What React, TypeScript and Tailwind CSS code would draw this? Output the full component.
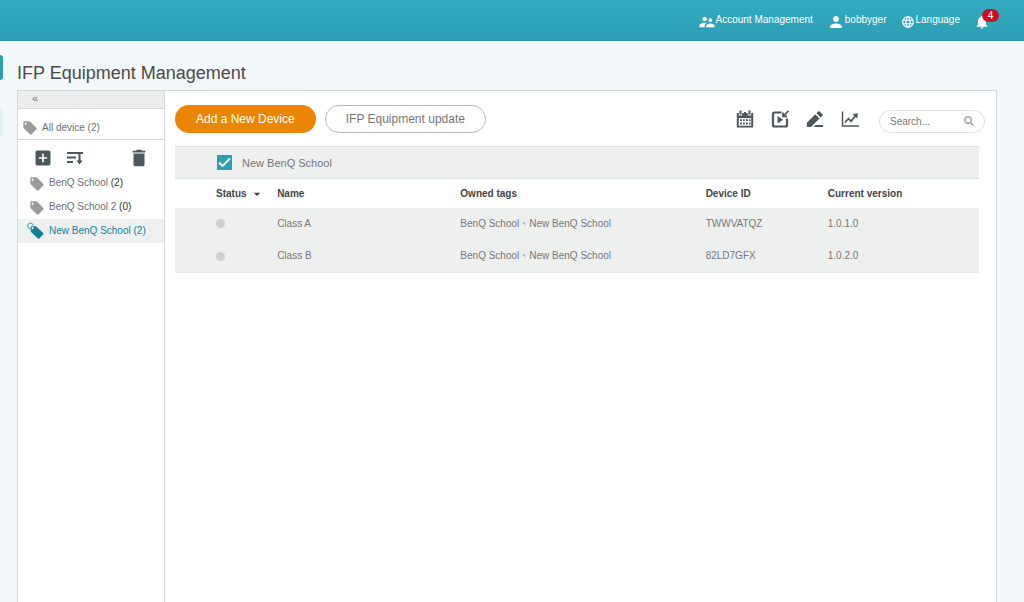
import React from 'react';
import {
  MdAddBox,
  MdArrowDropDown,
  MdDelete,
  MdLanguage,
  MdLocalOffer,
  MdNotifications,
  MdPerson,
  MdSupervisorAccount,
} from 'react-icons/md';
import { FaSearch } from 'react-icons/fa';

const tags = [
  { id: 'benq-school', name: 'BenQ School', count: 2, active: false },
  { id: 'benq-school-2', name: 'BenQ School 2', count: 0, active: false },
  { id: 'new-benq-school', name: 'New BenQ School', count: 2, active: true },
];

const devices = [
  { name: 'Class A', tags: ['BenQ School', 'New BenQ School'], deviceId: 'TWWVATQZ', version: '1.0.1.0' },
  { name: 'Class B', tags: ['BenQ School', 'New BenQ School'], deviceId: '82LD7GFX', version: '1.0.2.0' },
];

const SortIcon: React.FC = () => (
  <svg viewBox="0 0 16 16" className="w-4 h-4" fill="none" stroke="currentColor" strokeWidth="2" aria-hidden="true">
    <path d="M0 3h16M0 7.5h9M0 12h6" />
    <path d="M12.5 3v10" />
    <path d="M9.300 10.500h6.400l-3.200 4z" fill="currentColor" stroke="none" />
  </svg>
);

const CalendarIcon: React.FC = () => (
  <svg viewBox="0 0 18 18" className="w-[18px] h-[18px]" fill="currentColor" aria-hidden="true">
    <path d="M.8 3h2v2.500h3.400V3h5.600v2.500h3.400V3h2v14.500H.8zM2.800 8v7.700h12.400V8z" fillRule="evenodd" />
    <path d="M3.500 0.500h2v4h-2zM8 2h2v2H8zM12.500 0.500h2v4h-2z" />
    <path d="M4 9.200h1.800V11H4zM7 9.200h1.800V11H7zM10 9.200h1.800V11H10zM13 9.200h1.600V11H13zM4 12.600h1.800v1.800H4zM7 12.600h1.800v1.800H7zM10 12.600h1.800v1.800H10zM13 12.600h1.600v1.800H13z" />
  </svg>
);

const PushIcon: React.FC = () => (
  <svg viewBox="0 0 18 18" className="w-[18px] h-[18px]" fill="none" stroke="currentColor" aria-hidden="true">
    <path d="M10.500 2.500h-7A1.500 1.500 0 0 0 2 4v11a1.500 1.500 0 0 0 1.500 1.500h11A1.500 1.500 0 0 0 16 15V8.500" strokeWidth="2.200" />
    <path d="M6.500 6v7.400l5.600-3.700z" fill="currentColor" stroke="none" />
    <path d="M17.500 0.800l-5 5M12 2.400v4h4" strokeWidth="1.700" />
  </svg>
);

const EditIcon: React.FC = () => (
  <svg viewBox="0 0 18 18" className="w-[18px] h-[18px]" fill="currentColor" aria-hidden="true">
    <path d="M.8 12.800V17H5l8.500-8.500-4.200-4.200z" />
    <path d="M10.400 3.300l4.200 4.200 1.900-1.900a1 1 0 0 0 0-1.400l-2.800-2.800a1 1 0 0 0-1.400 0z" />
    <path d="M9.500 15H17v2H7.500z" />
  </svg>
);

const ChartIcon: React.FC = () => (
  <svg viewBox="0 0 18 18" className="w-[18px] h-[18px]" fill="none" stroke="currentColor" aria-hidden="true">
    <path d="M1.500 1.500v14.500H18" strokeWidth="1.500" />
    <path d="M4 12.500l3.500-4 2.500 2.800 5-6.300" strokeWidth="1.800" />
    <path d="M11.500 4l5.200-.8-.2 5.200z" fill="currentColor" stroke="none" />
  </svg>
);

const ActiveTagIcon: React.FC = () => (
  <svg viewBox="0 0 18 18" className="w-[18px] h-[18px]" fill="none" aria-hidden="true">
    <path d="M3.500 4.500l5.500-.3 7.200 6.800a1 1 0 0 1 0 1.400l-4 4a1 1 0 0 1-1.400 0L3.800 9.800z" fill="#13809a" />
    <circle cx="3.500" cy="4" r="2.800" stroke="#3fa3b6" />
    <circle cx="5.600" cy="6.200" r="1" fill="#fff" />
  </svg>
);

const actions = [
  { label: 'Schedule', Icon: CalendarIcon },
  { label: 'Push to device', Icon: PushIcon },
  { label: 'Edit', Icon: EditIcon },
  { label: 'Statistics', Icon: ChartIcon },
];

const TopBar: React.FC = () => (
  <header className="h-[41px] shrink-0 flex items-center justify-end gap-[14px] pr-[34px] bg-gradient-to-b from-[#33abc1] to-[#2c9fb4] border-b border-[#2a8fa0] text-white text-[10px] leading-4">
    <a href="#account" className="flex items-center">
      <MdSupervisorAccount className="w-[18px] h-[18px] mt-1" />
      Account Management
    </a>
    <a href="#profile" className="flex items-center">
      <MdPerson className="w-[18px] h-[18px] mt-1" />
      bobbyger
    </a>
    <a href="#language" className="flex items-center gap-px">
      <MdLanguage className="w-[14px] h-[14px] mt-1" />
      Language
    </a>
    <button type="button" aria-label="Notifications" className="relative">
      <MdNotifications className="w-4 h-4 mt-1" />
      <span className="absolute left-2 top-0 -mt-px w-[17px] h-[13px] rounded-full bg-[#cf0f1f] text-[10px] leading-[13px] text-center">
        4
      </span>
    </button>
  </header>
);

const Sidebar: React.FC = () => (
  <aside className="w-[147px] shrink-0 border-r border-[#d5d8d8] text-[#6b6f70] text-[10px] leading-4">
    <button
      type="button"
      aria-label="Collapse"
      className="flex w-full h-[18px] pl-[14px] bg-[#ebeded] border-b border-[#d5d8d8] text-[11px] leading-[14px]"
    >
      «
    </button>
    <a href="#all" className="flex items-center gap-1 h-[31px] pl-1 pt-[7px] border-b border-[#d5d8d8]">
      <MdLocalOffer className="w-4 h-4 text-[#9b9b9b]" />
      All device (2)
    </a>
    <div className="flex items-center h-[31px] pt-1 pl-[15px] pr-[14px] text-[#4d585c]">
      <button type="button" aria-label="Add tag">
        <MdAddBox className="w-5 h-5" />
      </button>
      <button type="button" aria-label="Sort tags" className="ml-[14px]">
        <SortIcon />
      </button>
      <button type="button" aria-label="Delete tag" className="ml-auto">
        <MdDelete className="w-[22px] h-[22px]" />
      </button>
    </div>
    <ul>
      {tags.map((tag) => (
        <li key={tag.id}>
          <a
            href={`#${tag.id}`}
            className={
              tag.active
                ? 'flex items-center gap-1 h-6 pl-[9px] bg-[#eff0f0] text-[#13809a]'
                : 'flex items-center gap-1 h-6 pl-[11px]'
            }
          >
            {tag.active ? <ActiveTagIcon /> : <MdLocalOffer className="w-4 h-4 mt-0.5 text-[#9b9b9b]" />}
            <span>
              {tag.name} <span className={tag.active ? '' : 'text-[#333]'}>({tag.count})</span>
            </span>
          </a>
        </li>
      ))}
    </ul>
  </aside>
);

const Toolbar: React.FC = () => (
  <div className="flex items-start gap-[9px] pr-[11px]">
    <button type="button" className="h-7 px-[21px] rounded-full bg-[#ea8603] text-white text-[12px] leading-4">
      Add a New Device
    </button>
    <button
      type="button"
      className="h-7 px-5 rounded-full border border-[#b9bcbc] text-[#777] text-[12px] leading-4"
    >
      IFP Equipment update
    </button>
    <div className="flex items-center gap-[17px] ml-auto mt-[5px] text-[#4d585c]">
      {actions.map(({ label, Icon }) => (
        <button key={label} type="button" aria-label={label}>
          <Icon />
        </button>
      ))}
    </div>
    <label className="flex items-center w-[106px] h-[23px] ml-[11px] mt-[5px] pl-[10px] pr-[10px] rounded-full border border-[#dfe2e2]">
      <input
        type="text"
        aria-label="Search"
        placeholder="Search..."
        className="w-full min-w-0 text-[10px] leading-4 outline-none placeholder:text-[#777]"
      />
      <FaSearch className="w-[10px] h-[10px] shrink-0 mb-0.5 text-[#a5a8a8]" />
    </label>
  </div>
);

const DeviceTable: React.FC = () => (
  <div className="mt-[13px] pr-[17px] text-[10px] leading-4 text-[#777]">
    <label className="flex items-center gap-[10px] h-[33px] pl-[42px] bg-[#eef0f0] border-y border-[#e0e3e3] text-[11px]">
      <span className="relative flex">
        <input
          type="checkbox"
          defaultChecked
          className="peer appearance-none w-[15px] h-[15px] bg-white border border-[#999] checked:bg-[#2b9fb5] checked:border-[#2b9fb5]"
        />
        <svg
          viewBox="0 0 15 15"
          className="absolute inset-0 hidden pointer-events-none peer-checked:block"
          fill="none"
          stroke="#fff"
          strokeWidth="1.800"
          aria-hidden="true"
        >
          <path d="M2 7.500L5.500 11 13 3.500" />
        </svg>
      </span>
      New BenQ School
    </label>
    <table className="w-full table-fixed text-left">
      <thead>
        <tr className="h-[29px] text-[#444]">
          <th className="w-[102px] pl-[41px] whitespace-nowrap">
            <button type="button" className="flex items-center gap-0.5 font-bold">
              Status
              <MdArrowDropDown className="w-4 h-4" />
            </button>
          </th>
          <th className="w-[183px]">Name</th>
          <th className="w-[245px]">Owned tags</th>
          <th className="w-[122px]">Device ID</th>
          <th className="w-[151px]">Current version</th>
        </tr>
      </thead>
      <tbody>
        {devices.map((device) => (
          <tr key={device.deviceId} className="h-8 bg-[#eef0f0] border-b border-[#e8ebeb]">
            <td className="pl-[41px]">
              <span className="block w-[9px] h-[9px] rounded-full bg-[#cfd1d1]" />
            </td>
            <td>{device.name}</td>
            <td lang="zh-Hant">{device.tags.join('、')}</td>
            <td>{device.deviceId}</td>
            <td>{device.version}</td>
          </tr>
        ))}
      </tbody>
    </table>
  </div>
);

const App: React.FC = () => {
  return (
    <div className="min-h-screen flex flex-col bg-[#f3f9fb] font-['Liberation_Sans','Noto_Sans_CJK_TC',sans-serif]">
      <TopBar />
      <div className="flex-1 flex">
        {/* Edge of the collapsed navigation */}
        <nav className="w-[17px] shrink-0 pt-[14px]">
          <div className="w-[3px] h-[25px] rounded-r-sm bg-[#2f9fae]" />
          <div className="w-[3px] h-[29px] mt-7 bg-[#e2f2f3]" />
        </nav>
        <main className="flex-1 min-w-0 flex flex-col pr-[27px]">
          <h1 className="h-[49px] pt-5 text-[18px] leading-6 text-[#4a4a4a]">IFP Equipment Management</h1>
          <div className="flex-1 flex bg-white border border-b-0 border-[#d5d8d8]">
            <Sidebar />
            <section className="flex-1 min-w-0 pl-[10px] pt-[14px]">
              <Toolbar />
              <DeviceTable />
            </section>
          </div>
        </main>
      </div>
    </div>
  );
};

export default App;
